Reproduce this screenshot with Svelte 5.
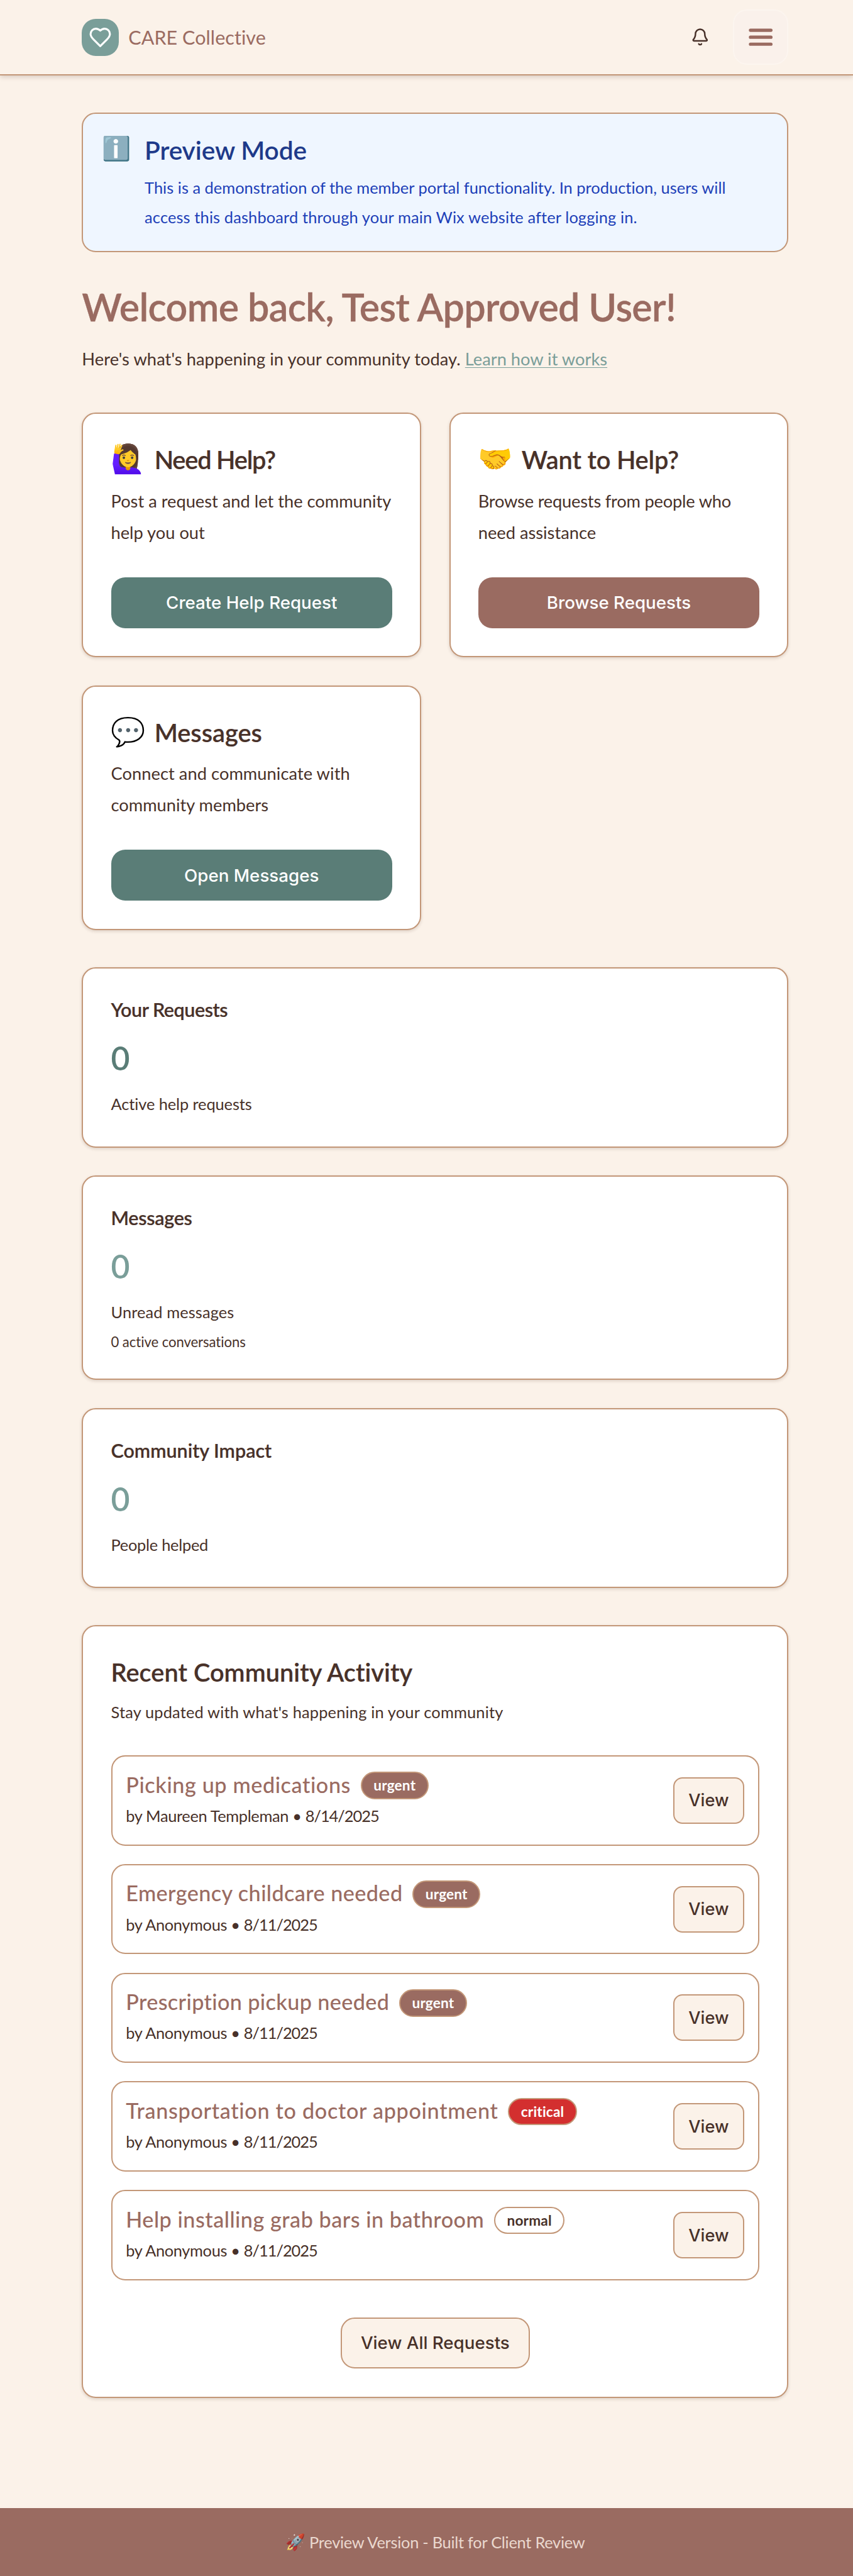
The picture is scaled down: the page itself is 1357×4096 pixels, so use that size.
<script>
  const actions = [
    { icon: '🙋‍♀️', title: 'Need Help?', track: -0.03, lines: ['Post a request and let the community', 'help you out'], cta: 'Create Help Request', tone: 'green' },
    { icon: '🤝', title: 'Want to Help?', track: -0.0045, lines: ['Browse requests from people who', 'need assistance'], lineTrack: -0.0075, cta: 'Browse Requests', tone: 'brown' },
    { icon: '💬', title: 'Messages', track: 0, lines: ['Connect and communicate with', 'community members'], lineTrack: 0.002, cta: 'Open Messages', tone: 'green' }
  ];

  const stats = [
    { title: 'Your Requests', track: -0.015, value: 0, label: 'Active help requests', labelTrack: -0.004, tone: 'deep' },
    { title: 'Messages', track: -0.01, value: 0, label: 'Unread messages', labelTrack: 0.004, note: '0 active conversations', tone: 'sage' },
    { title: 'Community Impact', track: -0.0005, value: 0, label: 'People helped', labelTrack: -0.0105, tone: 'sage' }
  ];

  const requests = [
    { title: 'Picking up medications', track: 0.017, by: 'Maureen Templeman', date: '8/14/2025', level: 'urgent' },
    { title: 'Emergency childcare needed', track: 0.012, by: 'Anonymous', date: '8/11/2025', level: 'urgent' },
    { title: 'Prescription pickup needed', track: 0.0105, by: 'Anonymous', date: '8/11/2025', level: 'urgent' },
    { title: 'Transportation to doctor appointment', track: 0.0197, by: 'Anonymous', date: '8/11/2025', level: 'critical' },
    { title: 'Help installing grab bars in bathroom', track: 0.0145, by: 'Anonymous', date: '8/11/2025', level: 'normal' }
  ];
</script>

<div class="page">
  <header>
    <a class="brand" href="#home">
      <span class="logo">
        <svg viewBox="0 0 24 24" fill="none" stroke="currentColor" stroke-width="2" stroke-linecap="round" stroke-linejoin="round">
          <path d="M19 14c1.49-1.46 3-3.21 3-5.5A5.5 5.5 0 0 0 16.5 3c-1.76 0-3 .5-4.5 2-1.5-1.5-2.74-2-4.5-2A5.5 5.5 0 0 0 2 8.5c0 2.3 1.5 4.05 3 5.5l7 7Z" />
        </svg>
      </span>
      <span class="name">CARE Collective</span>
    </a>
    <div class="tools">
      <button class="bell" aria-label="Notifications">
        <svg viewBox="0 0 24 24" fill="none" stroke="currentColor" stroke-width="2" stroke-linecap="round" stroke-linejoin="round">
          <path d="M10.268 21a2 2 0 0 0 3.464 0" />
          <path d="M3.262 15.326A1 1 0 0 0 4 17h16a1 1 0 0 0 .74-1.673C19.41 13.956 18 12.499 18 8A6 6 0 0 0 6 8c0 4.499-1.411 5.956-2.738 7.326" />
        </svg>
      </button>
      <button class="menu" aria-label="Menu">
        <svg viewBox="0 0 24 24" fill="none" stroke="currentColor" stroke-width="2.8" stroke-linecap="round">
          <path d="M3.2 6h17.6M3.2 12h17.6M3.2 18h17.6" />
        </svg>
      </button>
    </div>
  </header>

  <main>
    <section class="preview">
      <span class="emoji">ℹ️</span>
      <div>
        <h2>Preview Mode</h2>
        <p>
          This is a demonstration of the member portal functionality. In production, users will<br />
          <span class="second">access this dashboard through your main Wix website after logging in.</span>
        </p>
      </div>
    </section>

    <h1>Welcome back, Test Approved User!</h1>
    <p class="lead">Here's what's happening in your community today. <a href="#how">Learn how it works</a></p>

    <section class="actions">
      {#each actions as a}
        <article class="card">
          <h2><span class="emoji">{a.icon}</span><span style:letter-spacing="{a.track}em">{a.title}</span></h2>
          <p><span style:letter-spacing="{a.lineTrack ?? 0}em">{a.lines[0]}</span><br />{a.lines[1]}</p>
          <button class="cta {a.tone}">{a.cta}</button>
        </article>
      {/each}
    </section>

    <section class="stats">
      {#each stats as s}
        <article class="card" class:tall={s.note}>
          <h3 style:letter-spacing="{s.track}em">{s.title}</h3>
          <div class="value {s.tone}">{s.value}</div>
          <p class="label" style:letter-spacing="{s.labelTrack}em">{s.label}</p>
          {#if s.note}<p class="note">{s.note}</p>{/if}
        </article>
      {/each}
    </section>

    <section class="card activity">
      <h2>Recent Community Activity</h2>
      <p class="sub">Stay updated with what's happening in your community</p>
      <ul>
        {#each requests as r}
          <li>
            <div class="info">
              <div class="row">
                <span class="title" style:letter-spacing="{r.track}em">{r.title}</span>
                <span class="badge {r.level}">{r.level}</span>
              </div>
              <p class="meta">by {r.by} • <span class="date">{r.date}</span></p>
            </div>
            <button class="view">View</button>
          </li>
        {/each}
      </ul>
      <button class="all">View All Requests</button>
    </section>
  </main>

  <footer><span class="emoji">🚀</span><span>Preview Version - Built for Client Review</span></footer>
</div>

<style>
  :global(html) { font-size: 9.2439px; }
  :global(body) { margin: 0; background: #fbf2e9; }

  .page {
    --tan: #c39778;
    --brown: #9a6b61;
    --ink: #483129;
    width: 100%;
    height: 4096px;
    display: flex;
    flex-direction: column;
    overflow: hidden;
    background: #fbf2e9;
    color: var(--ink);
    font-family: Lato, 'Open Sans', sans-serif;
  }
  h1, h2, h3, p, ul { margin: 0; padding: 0; font-weight: 400; }
  button { font-family: Inter, sans-serif; font-weight: 500; padding: 0; box-sizing: border-box; border: 0; }
  .emoji { font-family: 'Noto Color Emoji', sans-serif; }

  header {
    flex: none;
    box-sizing: border-box;
    height: 13rem;
    padding: 0 11.1rem 0 14.1rem;
    display: flex;
    align-items: center;
    justify-content: space-between;
    border-bottom: 2px solid var(--tan);
    box-shadow: 0 2px 8px rgba(60, 30, 15, 0.2);
  }
  .brand { display: flex; align-items: center; gap: 1.6rem; color: var(--brown); text-decoration: none; }
  .logo {
    width: 6.4rem; height: 6.4rem; border-radius: 2.4rem;
    display: grid; place-items: center;
    background: #7a9e99; color: #fff;
  }
  .logo svg { width: 4rem; height: 4rem; }
  .name { font-size: 3.3rem; line-height: 4.8rem; letter-spacing: 0.002em; }
  .tools { display: flex; align-items: center; gap: 0.8rem; }
  .bell { width: 9.6rem; height: 9.6rem; background: none; color: var(--ink); display: grid; place-items: center; }
  .bell svg { width: 3.2rem; height: 3.2rem; }
  .menu {
    width: 9.6rem; height: 9.6rem; display: grid; place-items: center;
    border: 2px solid #fcf5ef; border-radius: 2.4rem; background: #faf1eb; color: var(--brown);
  }
  .menu svg { width: 4.8rem; height: 4.8rem; }

  main { flex: none; width: 121.6rem; margin-left: 14.1rem; padding-top: 6.4rem; }

  .preview {
    box-sizing: border-box;
    height: 24rem;
    padding: 3.2rem;
    display: flex;
    gap: 2.4rem;
    border: 2px solid var(--tan);
    border-radius: 2.4rem;
    background: #eff6ff;
    color: #1e40af;
  }
  .preview .emoji { width: 4.98rem; font-size: 4rem; line-height: 5.6rem; }
  .preview h2 { font-size: 4.4rem; font-weight: 600; line-height: 6rem; letter-spacing: -0.003em; color: #1e3a8a; }
  .preview p { margin-top: 0.9rem; font-size: 2.75rem; line-height: 5.1rem; letter-spacing: 0.0007em; white-space: nowrap; color: #1d40b8; }
  .second { letter-spacing: 0.005em; }

  h1 { margin-top: 5.35rem; font-size: 6.6rem; font-weight: 600; line-height: 8rem; letter-spacing: -0.0111em; color: var(--brown); -webkit-text-stroke: 0.3px currentColor; }
  .lead { margin-top: 2.3rem; font-size: 2.95rem; line-height: 5.44rem; letter-spacing: 0.0025em; }
  .lead a { color: #7a9e99; letter-spacing: 0; text-underline-offset: 0.3rem; text-decoration-thickness: 1px; }

  .card {
    box-sizing: border-box;
    padding: 4.88rem 4.78rem 4.7rem;
    border: 2px solid var(--tan);
    border-radius: 2.4rem;
    background: #fff;
    box-shadow: 0 2px 5px rgba(60, 30, 15, 0.16);
  }
  .actions { margin-top: 6.5rem; display: grid; grid-template-columns: 1fr 1fr; gap: 4.8rem; }
  .actions .card { height: 42.1rem; }
  .actions h2 { display: flex; align-items: center; gap: 1.5rem; height: 6rem; font-size: 4.3rem; font-weight: 600; line-height: 6rem; -webkit-text-stroke: 0.2px currentColor; }
  .actions .emoji { width: 5.98rem; font-size: 4.8rem; font-weight: 400; -webkit-text-stroke: 0; }
  .actions p { margin-top: 1.4rem; font-size: 2.95rem; line-height: 5.44rem; white-space: nowrap; }
  .cta { display: block; width: 100%; height: 8.8rem; margin-top: 4.9rem; border-radius: 2.4rem; font-size: 3rem; color: #fff; }
  .green { background: #5a7d77; }
  .brown { background: var(--brown); }

  .stats { margin-top: 6.4rem; display: flex; flex-direction: column; gap: 4.8rem; }
  .stats .card { height: 31rem; }
  .stats .tall { height: 35.2rem; }
  h3 { font-size: 3.3rem; font-weight: 600; line-height: 4.4rem; -webkit-text-stroke: 0.2px currentColor; }
  .value { margin-top: 2.55rem; font-size: 5.6rem; font-weight: 600; line-height: 7.2rem; }
  .deep { color: #5a7d77; }
  .sage { color: #7a9e99; }
  .label { margin-top: 1.75rem; font-size: 2.75rem; line-height: 5.1rem; }
  .note { margin-top: 0.7rem; font-size: 2.4rem; line-height: 3.7rem; letter-spacing: -0.004em; }

  .activity { margin-top: 6.4rem; height: 132.9rem; text-align: center; }
  .activity h2 { font-size: 4.3rem; font-weight: 600; line-height: 6rem; text-align: left; letter-spacing: 0.0005em; -webkit-text-stroke: 0.2px currentColor; }
  .sub { margin-top: 1.35rem; font-size: 2.75rem; line-height: 5.1rem; letter-spacing: 0.0067em; text-align: left; }
  ul { margin-top: 4.8rem; display: flex; flex-direction: column; gap: 3.15rem; list-style: none; text-align: left; }
  li {
    box-sizing: border-box;
    height: 15.55rem;
    padding: 0 2.4rem 0 2.35rem;
    display: flex;
    align-items: center;
    justify-content: space-between;
    border: 2px solid var(--tan);
    border-radius: 2.4rem;
  }
  .info { height: 10.3rem; }
  .row { display: flex; align-items: center; gap: 1.7rem; height: 5.2rem; }
  .title { padding-bottom: 0.3rem; font-size: 3.7rem; font-weight: 500; line-height: 4.8rem; color: var(--brown); white-space: nowrap; }
  .badge {
    box-sizing: border-box; height: 4.7rem; padding: 0 2rem;
    display: flex; align-items: center;
    border: 2px solid var(--tan); border-radius: 2.4rem;
    font-size: 2.45rem; font-weight: 700; line-height: 3rem; letter-spacing: 0.008em; color: #fff;
  }
  .urgent { background: var(--brown); }
  .critical { background: #d32f2f; }
  .normal { background: #fff; color: var(--ink); }
  .meta { margin-top: 0.6rem; font-size: 2.75rem; line-height: 4rem; letter-spacing: -0.014em; }
  .date { letter-spacing: -0.04em; }
  .view, .all { border: 2px solid var(--tan); background: #fbf2e9; color: var(--ink); font-size: 2.95rem; }
  .view { width: 12.25rem; height: 8rem; border-radius: 1.6rem; }
  .all { width: 32.6rem; height: 8.8rem; margin-top: 6.35rem; border-radius: 2.4rem; font-size: 3rem; }

  footer {
    flex: none;
    box-sizing: border-box;
    height: 11.65rem;
    margin-top: auto;
    padding-left: 3rem;
    display: flex;
    align-items: center;
    justify-content: center;
    gap: 0.7rem;
    background: var(--brown);
    color: #ead8cf;
    font-size: 2.75rem;
    letter-spacing: -0.0105em;
  }
  footer .emoji { opacity: 0.85; }
</style>
